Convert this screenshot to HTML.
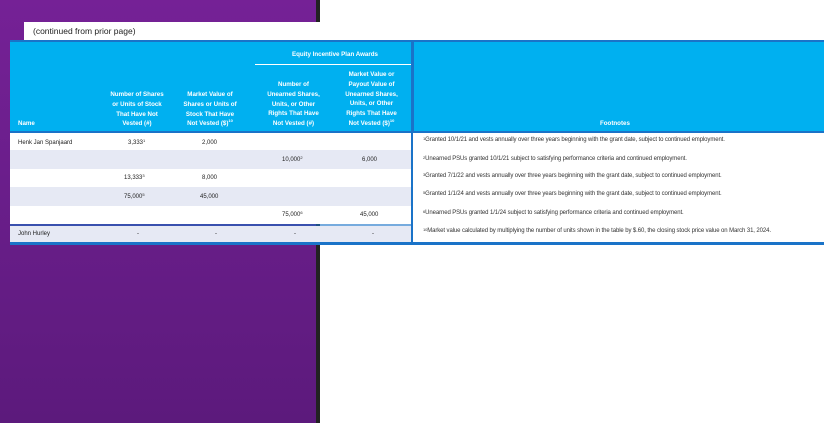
<!DOCTYPE html>
<html><head><style>
body{margin:0;width:824px;height:425px;position:relative;background:#fff;font-family:"Liberation Sans",sans-serif;overflow:hidden}
.purple{position:absolute;left:0;top:0;width:316px;height:423px;background:linear-gradient(#752196,#5c1a7c);border-right:4px solid #222}
.cont{position:absolute;left:24px;top:22px;width:386px;height:18px;background:#fff;font-size:8.5px;color:#222;line-height:18px;padding-left:9px;box-sizing:border-box}
.hdr{position:absolute;left:10px;top:40px;width:814px;height:93px;background:#00b0f0;border-top:2px solid #1a73c8;border-bottom:2px solid #1a73c8;box-sizing:border-box}
.h{position:absolute;color:#fff;font-weight:bold;font-size:6.2px;line-height:9.8px;text-align:center;white-space:nowrap}
.row{position:absolute;left:10px;width:402px}
.c{position:absolute;font-size:6px;color:#222;line-height:8px}
.fn{position:absolute;left:413px;width:411px;top:133px;height:112px;background:#fff;border-bottom:3px solid #1a73c8;box-sizing:border-box}
.fn div{position:absolute;left:10px;font-size:6px;color:#333;white-space:nowrap;line-height:7px;letter-spacing:-0.1px}
sup{font-size:4px;vertical-align:top;line-height:4px}
</style></head><body>
<div class="purple"></div>
<div class="cont">(continued from prior page)</div>
<div class="hdr">
<div class="h" style="left:245px;top:8px;width:160px">Equity Incentive Plan Awards</div>
<div style="position:absolute;left:245px;top:22px;width:158px;height:1px;background:#fff"></div>
<div class="h" style="left:8px;top:77px;text-align:left">Name</div>
<div class="h" style="left:90px;top:48px;width:74px">Number of Shares<br>or Units of Stock<br>That Have Not<br>Vested (#)</div>
<div class="h" style="left:165px;top:48px;width:70px">Market Value of<br>Shares or Units of<br>Stock That Have<br>Not Vested ($)<sup>10</sup></div>
<div class="h" style="left:246px;top:38px;width:75px">Number of<br>Unearned Shares,<br>Units, or Other<br>Rights That Have<br>Not Vested (#)</div>
<div class="h" style="left:324px;top:28px;width:75px">Market Value or<br>Payout Value of<br>Unearned Shares,<br>Units, or Other<br>Rights That Have<br>Not Vested ($)<sup>10</sup></div>
<div class="h" style="left:590px;top:77px">Footnotes</div>
<div style="position:absolute;left:401px;top:-2px;width:3px;height:93px;background:#1a73c8"></div>
</div>
<div class="row" style="top:133px;height:17px;background:#fff"></div>
<div class="row" style="top:150px;height:19px;background:#e6e9f4"></div>
<div class="row" style="top:169px;height:18px;background:#fff"></div>
<div class="row" style="top:187px;height:19px;background:#e6e9f4"></div>
<div class="row" style="top:206px;height:18px;background:#fff"></div>
<div class="row" style="top:224px;height:2px;background:#1a73c8;opacity:.6"></div>
<div class="row" style="top:226px;height:16px;background:#e6e9f4"></div>
<div class="row" style="top:242px;height:3px;background:#1a73c8"></div>
<div style="position:absolute;left:411px;top:133px;width:3px;height:112px;background:#1a73c8"></div>
<div class="c" style="left:18px;top:139px">Henk Jan Spanjaard</div>
<div class="c" style="left:128px;top:139px">3,333<sup>1</sup></div>
<div class="c" style="left:202px;top:139px">2,000</div>
<div class="c" style="left:282px;top:156px">10,000<sup>2</sup></div>
<div class="c" style="left:362px;top:156px">6,000</div>
<div class="c" style="left:124px;top:174px">13,333<sup>3</sup></div>
<div class="c" style="left:202px;top:174px">8,000</div>
<div class="c" style="left:124px;top:193px">75,000<sup>5</sup></div>
<div class="c" style="left:200px;top:193px">45,000</div>
<div class="c" style="left:282px;top:211px">75,000<sup>6</sup></div>
<div class="c" style="left:360px;top:211px">45,000</div>
<div class="c" style="left:18px;top:230px">John Hurley</div>
<div class="c" style="left:137px;top:230px">-</div>
<div class="c" style="left:215px;top:230px">-</div>
<div class="c" style="left:294px;top:230px">-</div>
<div class="c" style="left:372px;top:230px">-</div>
<div class="fn">
<div style="top:4px"><sup>1</sup>Granted 10/1/21 and vests annually over three years beginning with the grant date, subject to continued employment.</div>
<div style="top:23px"><sup>2</sup>Unearned PSUs granted 10/1/21 subject to satisfying performance criteria and continued employment.</div>
<div style="top:40px"><sup>3</sup>Granted 7/1/22 and vests annually over three years beginning with the grant date, subject to continued employment.</div>
<div style="top:58px"><sup>5</sup>Granted 1/1/24 and vests annually over three years beginning with the grant date, subject to continued employment.</div>
<div style="top:77px"><sup>6</sup>Unearned PSUs granted 1/1/24 subject to satisfying performance criteria and continued employment.</div>
<div style="top:95px"><sup>10</sup>Market value calculated by multiplying the number of units shown in the table by $.60, the closing stock price value on March 31, 2024.</div>
</div>
</body></html>
